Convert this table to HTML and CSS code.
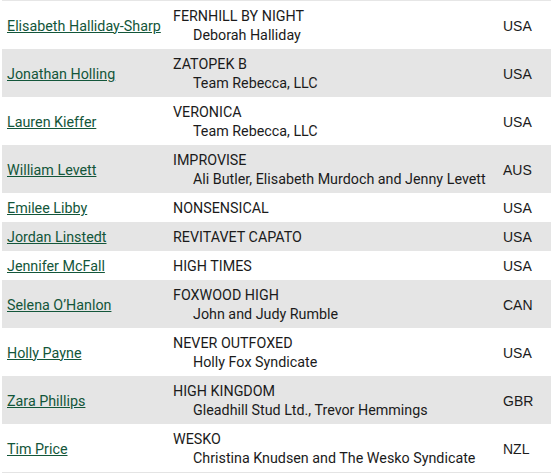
FILE: index.html
```html
<!DOCTYPE html>
<html>
<head>
<meta charset="utf-8">
<link rel="stylesheet" href="styles.css">
</head>
<body>
<div class="wrap">
<table class="entries">
  <colgroup><col class="c-rider"><col class="c-horse"><col class="c-nat"></colgroup>
  <tbody>
    <tr><td class="rider"><a href="#">Elisabeth Halliday-Sharp</a></td><td class="horse">FERNHILL BY NIGHT<div class="owner">Deborah Halliday</div></td><td class="nat">USA</td></tr>
    <tr><td class="rider"><a href="#">Jonathan Holling</a></td><td class="horse">ZATOPEK B<div class="owner">Team Rebecca, LLC</div></td><td class="nat">USA</td></tr>
    <tr><td class="rider"><a href="#">Lauren Kieffer</a></td><td class="horse">VERONICA<div class="owner">Team Rebecca, LLC</div></td><td class="nat">USA</td></tr>
    <tr><td class="rider"><a href="#">William Levett</a></td><td class="horse">IMPROVISE<div class="owner">Ali Butler, Elisabeth Murdoch and Jenny Levett</div></td><td class="nat">AUS</td></tr>
    <tr><td class="rider"><a href="#">Emilee Libby</a></td><td class="horse">NONSENSICAL</td><td class="nat">USA</td></tr>
    <tr><td class="rider"><a href="#">Jordan Linstedt</a></td><td class="horse">REVITAVET CAPATO</td><td class="nat">USA</td></tr>
    <tr><td class="rider"><a href="#">Jennifer McFall</a></td><td class="horse">HIGH TIMES</td><td class="nat">USA</td></tr>
    <tr><td class="rider"><a href="#">Selena O’Hanlon</a></td><td class="horse">FOXWOOD HIGH<div class="owner">John and Judy Rumble</div></td><td class="nat">CAN</td></tr>
    <tr><td class="rider"><a href="#">Holly Payne</a></td><td class="horse">NEVER OUTFOXED<div class="owner">Holly Fox Syndicate</div></td><td class="nat">USA</td></tr>
    <tr><td class="rider"><a href="#">Zara Phillips</a></td><td class="horse">HIGH KINGDOM<div class="owner">Gleadhill Stud Ltd., Trevor Hemmings</div></td><td class="nat">GBR</td></tr>
    <tr><td class="rider"><a href="#">Tim Price</a></td><td class="horse">WESKO<div class="owner">Christina Knudsen and The Wesko Syndicate</div></td><td class="nat">NZL</td></tr>
  </tbody>
</table>
</div>
</body>
</html>
```
FILE: styles.css
```css
html, body {
  margin: 0;
  padding: 0;
  background: #ffffff;
}
.wrap {
  padding-left: 2px;
  width: 549px;
}
.entries {
  width: 549px;
  border-collapse: collapse;
  table-layout: fixed;
  font-family: Roboto, "Liberation Sans", sans-serif;
  font-size: 14.3px;
  line-height: 19px;
  color: #1b1b1b;
  border-top: 1px solid #e6e6e6;
  border-bottom: 2px solid #e4e4e4;
}
.c-rider { width: 166px; }
.c-horse { width: 330px; }
.c-nat { width: 53px; }
.entries td {
  padding: 6px 5px 4px;
  vertical-align: middle;
}
.entries tr:nth-child(even) td {
  background: #e5e5e5;
}
.rider a {
  color: #13563a;
  text-decoration: underline;
}
.owner {
  padding-left: 20px;
}
.nat {
  font-family: "Liberation Sans", Arial, sans-serif;
  font-size: 14px;
}
```
